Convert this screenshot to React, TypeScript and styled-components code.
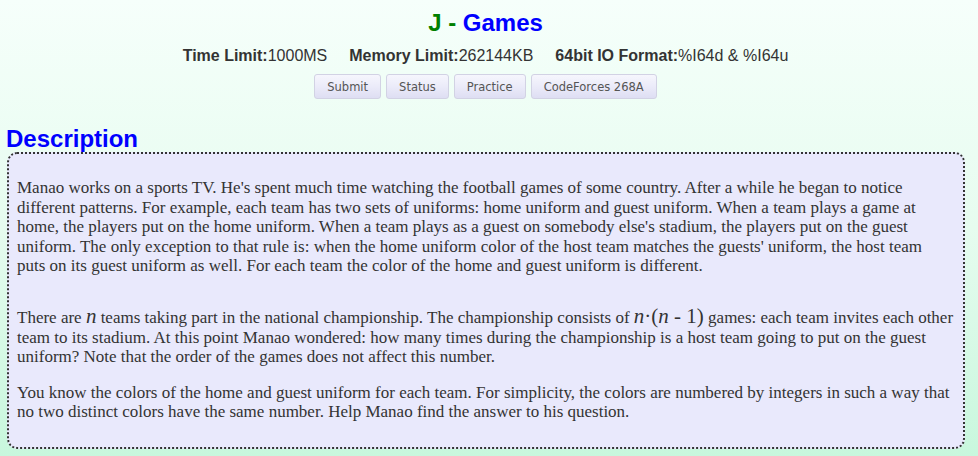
import React from "react";
import styled, { createGlobalStyle } from "styled-components";

const GlobalStyle = createGlobalStyle`
  html, body {
    margin: 0;
    padding: 0;
  }
  body {
    min-height: 456px;
    background: linear-gradient(to bottom, #f6fffb 0%, #e6fcef 50%, #c8f7dd 100%);
    font-family: "Liberation Sans", Arial, sans-serif;
    color: #333;
  }
`;

const Page = styled.div`
  padding: 0 13px 8px 6px;
`;

const Header = styled.header`
  display: flex;
  flex-direction: column;
  align-items: center;
`;

const Title = styled.h2`
  margin: 9px 0 0;
  font-size: 24px;
  line-height: 28px;
  font-weight: bold;
`;

const Green = styled.span`
  color: #008000;
`;

const Blue = styled.span`
  color: #0000ff;
`;

const InfoLine = styled.div`
  margin-top: 9px;
  display: flex;
  gap: 22px;
  font-size: 16px;
  line-height: 20px;
  color: #333;
`;

const InfoItem = styled.span`
  b {
    font-weight: bold;
  }
`;

const Buttons = styled.div`
  margin-top: 8px;
  display: flex;
  gap: 5px;
`;

const Button = styled.button`
  font-family: "DejaVu Sans", Verdana, sans-serif;
  font-size: 11.5px;
  color: #555;
  height: 25px;
  padding: 0 12px;
  border: 1px solid #d2d2e4;
  border-radius: 3px;
  background: linear-gradient(to bottom, #f6f6fd 0%, #ebebf9 50%, #dedef3 100%);
  cursor: pointer;
`;

const SectionTitle = styled.h3`
  margin: 28px 0 1px 0;
  font-size: 24px;
  line-height: 24px;
  font-weight: bold;
  color: #0000ff;
`;

const DescBox = styled.div`
  margin-left: 1px;
  border: 2px dotted #333;
  border-radius: 10px;
  background: #e9e9fc;
  padding: 8px 8px 9px;
  font-family: "Liberation Serif", "Times New Roman", serif;
  font-size: 17px;
  line-height: 19.5px;
  color: #333;
`;

const Para = styled.p`
  margin: 16px 0;
`;

const MathSpan = styled.span`
  display: inline-block;
  padding-top: 12px;
  font-family: "Liberation Serif", "Times New Roman", serif;
  font-size: 21px;
  line-height: 24px;
`;

const MathVar = styled.i`
  font-style: italic;
`;

export default function App() {
  return (
    <>
      <GlobalStyle />
      <Page>
        <Header>
          <Title>
            <Green>J - </Green>
            <Blue>Games</Blue>
          </Title>
          <InfoLine>
            <InfoItem>
              <b>Time Limit:</b>1000MS
            </InfoItem>
            <InfoItem>
              <b>Memory Limit:</b>262144KB
            </InfoItem>
            <InfoItem>
              <b>64bit IO Format:</b>%I64d &amp; %I64u
            </InfoItem>
          </InfoLine>
          <Buttons>
            <Button>Submit</Button>
            <Button>Status</Button>
            <Button>Practice</Button>
            <Button>CodeForces 268A</Button>
          </Buttons>
        </Header>
        <SectionTitle>Description</SectionTitle>
        <DescBox>
          <Para>
            Manao works on a sports TV. He's spent much time watching the football games of some
            country. After a while he began to notice different patterns. For example, each team
            has two sets of uniforms: home uniform and guest uniform. When a team plays a game at
            home, the players put on the home uniform. When a team plays as a guest on somebody
            else's stadium, the players put on the guest uniform. The only exception to that rule
            is: when the home uniform color of the host team matches the guests' uniform, the host
            team
            <br />
            puts on its guest uniform as well. For each team the color of the home and guest
            uniform is different.
          </Para>
          <Para>
            There are <MathSpan><MathVar>n</MathVar></MathSpan> teams taking part in the national
            championship. The championship consists of{" "}
            <MathSpan>
              <MathVar>n</MathVar>·(<MathVar>n</MathVar> - 1)
            </MathSpan>{" "}
            games: each team invites each other team to its stadium. At this point Manao wondered:
            how many times during the championship is a host team going to put on the guest
            uniform? Note that the order of the games does not affect this number.
          </Para>
          <Para>
            You know the colors of the home and guest uniform for each team. For simplicity, the
            colors are numbered by integers in such a way that no two distinct colors have the same
            number. Help Manao find the answer to his question.
          </Para>
        </DescBox>
      </Page>
    </>
  );
}
